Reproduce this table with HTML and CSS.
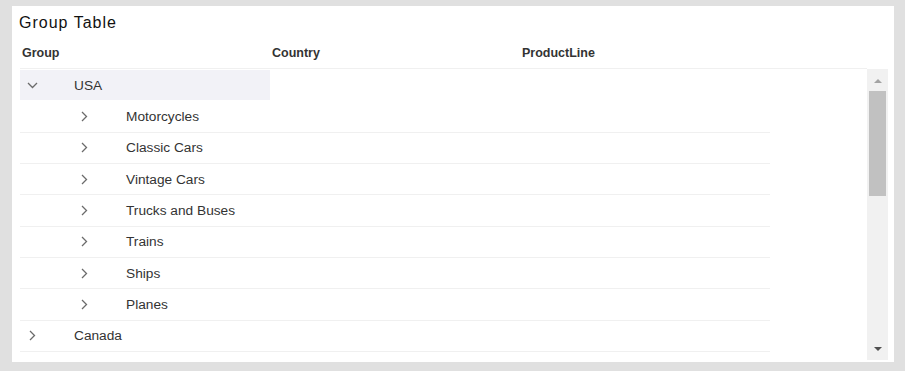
FILE: index.html
```html
<!DOCTYPE html>
<html>
<head>
<meta charset="utf-8">
<link rel="stylesheet" href="styles.css">
</head>
<body>
<div class="panel">
  <div class="title">Group Table</div>
  <div class="head">
    <div class="hcell">Group</div>
    <div class="hcell">Country</div>
    <div class="hcell">ProductLine</div>
  </div>
  <div class="body">
    <div class="rows">
      <div class="row open">
        <div class="cell group lvl0 sel"><span class="chev"><svg width="11" height="7" viewBox="0 0 11 7"><path d="M1 1 L5.5 5.5 L10 1" fill="none" stroke="#6b6b6b" stroke-width="1.3"/></svg></span><span>USA</span></div>
        <div class="cell"></div><div class="cell"></div>
      </div>
      <div class="row"><div class="cell group lvl1"><span class="chev"><svg width="7" height="11" viewBox="0 0 7 11"><path d="M1 1 L5.5 5.5 L1 10" fill="none" stroke="#6b6b6b" stroke-width="1.3"/></svg></span><span>Motorcycles</span></div><div class="cell"></div><div class="cell"></div></div>
      <div class="row"><div class="cell group lvl1"><span class="chev"><svg width="7" height="11" viewBox="0 0 7 11"><path d="M1 1 L5.5 5.5 L1 10" fill="none" stroke="#6b6b6b" stroke-width="1.3"/></svg></span><span>Classic Cars</span></div><div class="cell"></div><div class="cell"></div></div>
      <div class="row"><div class="cell group lvl1"><span class="chev"><svg width="7" height="11" viewBox="0 0 7 11"><path d="M1 1 L5.5 5.5 L1 10" fill="none" stroke="#6b6b6b" stroke-width="1.3"/></svg></span><span>Vintage Cars</span></div><div class="cell"></div><div class="cell"></div></div>
      <div class="row"><div class="cell group lvl1"><span class="chev"><svg width="7" height="11" viewBox="0 0 7 11"><path d="M1 1 L5.5 5.5 L1 10" fill="none" stroke="#6b6b6b" stroke-width="1.3"/></svg></span><span>Trucks and Buses</span></div><div class="cell"></div><div class="cell"></div></div>
      <div class="row"><div class="cell group lvl1"><span class="chev"><svg width="7" height="11" viewBox="0 0 7 11"><path d="M1 1 L5.5 5.5 L1 10" fill="none" stroke="#6b6b6b" stroke-width="1.3"/></svg></span><span>Trains</span></div><div class="cell"></div><div class="cell"></div></div>
      <div class="row"><div class="cell group lvl1"><span class="chev"><svg width="7" height="11" viewBox="0 0 7 11"><path d="M1 1 L5.5 5.5 L1 10" fill="none" stroke="#6b6b6b" stroke-width="1.3"/></svg></span><span>Ships</span></div><div class="cell"></div><div class="cell"></div></div>
      <div class="row"><div class="cell group lvl1"><span class="chev"><svg width="7" height="11" viewBox="0 0 7 11"><path d="M1 1 L5.5 5.5 L1 10" fill="none" stroke="#6b6b6b" stroke-width="1.3"/></svg></span><span>Planes</span></div><div class="cell"></div><div class="cell"></div></div>
      <div class="row"><div class="cell group lvl0"><span class="chev"><svg width="7" height="11" viewBox="0 0 7 11"><path d="M1 1 L5.5 5.5 L1 10" fill="none" stroke="#6b6b6b" stroke-width="1.3"/></svg></span><span>Canada</span></div><div class="cell"></div><div class="cell"></div></div>
      <div class="row"><div class="cell group lvl0"><span class="chev"></span><span></span></div><div class="cell"></div><div class="cell"></div></div>
    </div>
    <div class="scrollbar">
      <div class="arrow up"></div>
      <div class="track"><div class="thumb"></div></div>
      <div class="arrow down"></div>
    </div>
  </div>
</div>
</body>
</html>
```
FILE: styles.css
```css
* { box-sizing: border-box; }
html, body { margin: 0; padding: 0; }
body {
  background: #e0e0e0;
  font-family: "Liberation Sans", Arial, sans-serif;
  width: 905px;
  height: 371px;
  overflow: hidden;
  padding-top: 6px;
}
.panel {
  margin: 0 0 0 12px;
  width: 882px;
  height: 356px;
  background: #fff;
  padding: 0 6px 0 8px;
  display: flex;
  flex-direction: column;
}
.title {
  font-size: 16px;
  letter-spacing: 1px;
  color: #111;
  line-height: 20px;
  padding-top: 7px;
  margin-left: -1px;
}
.head {
  display: flex;
  width: 847px;
  height: 36px;
  border-bottom: 1px solid #f0f0f0;
  padding-top: 12px;
}
.hcell {
  width: 250px;
  padding-left: 2px;
  font-size: 12.5px;
  font-weight: bold;
  color: #333;
  line-height: 16px;
}
.body {
  display: flex;
  height: 293px;
}
.rows {
  width: 847px;
  height: 291px;
  overflow: hidden;
  padding-top: 1px;
}
.row {
  display: flex;
  width: 750px;
  height: 31.33px;
  border-bottom: 1px solid #f0f0f0;
}
.row.open { border-bottom-color: transparent; }
.cell {
  width: 250px;
  height: 100%;
  display: flex;
  align-items: center;
  font-size: 13.7px;
  color: #333;
}
.cell.sel { background: #f2f2f7; }
.chev {
  width: 20px;
  margin-right: 32px;
  display: flex;
  justify-content: center;
  align-items: center;
}
.lvl0 { padding-left: 2px; }
.lvl1 { padding-left: 54px; }
.scrollbar {
  width: 21px;
  height: 291px;
  background: #f1f1f1;
  display: flex;
  flex-direction: column;
  align-items: center;
}
.arrow {
  width: 0;
  height: 0;
  border-left: 4px solid transparent;
  border-right: 4px solid transparent;
}
.arrow.up {
  border-bottom: 4px solid #a3a3a3;
  margin-top: 10px;
}
.arrow.down {
  border-top: 4px solid #505050;
  margin-bottom: 9px;
}
.track {
  flex: 1;
  width: 17px;
  padding-top: 8px;
}
.thumb {
  height: 105px;
  background: #c1c1c1;
}
```
